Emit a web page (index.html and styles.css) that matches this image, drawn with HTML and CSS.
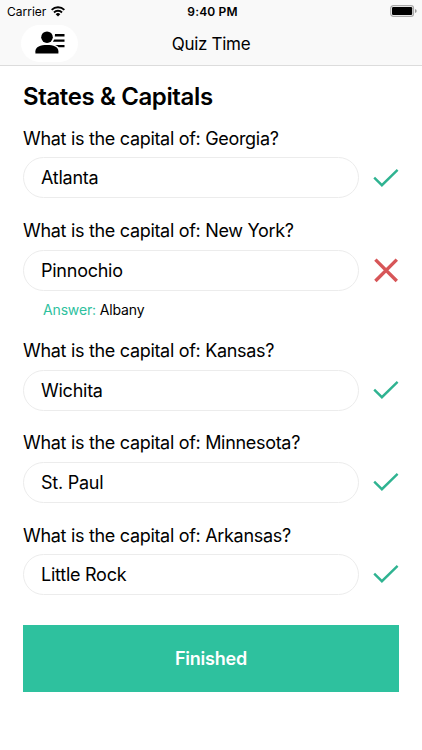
FILE: index.html
```html
<!DOCTYPE html>
<html lang="en">
<head>
<meta charset="utf-8">
<title>Quiz Time</title>
<link rel="stylesheet" href="styles.css">
</head>
<body>
<svg class="sprites" aria-hidden="true">
  <symbol id="check" viewBox="0 0 26 20"><path d="M1.2 9.7 8.9 17.2 24.6 1.8" fill="none" stroke="currentColor" stroke-width="2.4"/></symbol>
  <symbol id="cross" viewBox="0 0 26 26"><path d="M2.4 2.6 23.8 24M23.8 2.6 2.4 24" fill="none" stroke="currentColor" stroke-width="3.4"/></symbol>
</svg>
<header class="header">
  <div class="status">
    <div class="carrier"><span>Carrier</span>
      <svg class="wifi" width="14" height="11" viewBox="0 0 14 11"><path d="M.6 3.9a9 9 0 0 1 12.8 0M3 6.5a5.6 5.6 0 0 1 8 0" fill="none" stroke="#000" stroke-width="1.9"/><path d="M4.7 8.3a3.2 3.2 0 0 1 4.6 0L7 10.6z"/></svg>
    </div>
    <span class="time">9:40 PM</span>
    <svg class="battery" width="28" height="12" viewBox="0 0 28 12"><rect x=".7" y=".7" width="22.8" height="10.6" rx="2.6" fill="#f9f9f9" stroke="#aaa" stroke-width="1.2"/><rect x="2" y="2" width="20.2" height="8" rx="1.2"/><path d="M25 4.1q1.7.5 1.7 1.9T25 7.9z" fill="#999"/></svg>
  </div>
  <div class="nav">
    <div class="profile">
      <svg width="30" height="24" viewBox="0 0 30 24"><circle cx="12" cy="6.2" r="5.8"/><path d="M.4 22.4v-2.2c0-4.4 5.1-6.3 11.6-6.3s11.4 1.9 11.4 6.3v2.2z"/><path d="M20 3.1h9.5v2.3H19.8zM19.2 8.5h10.3v2.3H17.9zM20.2 14h9.3v2.3h-5.8q-1.3-1.5-3.5-2.3z"/></svg>
    </div>
    <h1 class="title">Quiz Time</h1>
  </div>
</header>
<main class="quiz">
  <h2 class="heading">States &amp; Capitals</h2>
  <section class="question">
    <p class="prompt">What is the capital of: Georgia?</p>
    <div class="row"><div class="field">Atlanta</div><svg class="check"><use href="#check"/></svg></div>
  </section>
  <section class="question">
    <p class="prompt">What is the capital of: New York?</p>
    <div class="row"><div class="field">Pinnochio</div><svg class="cross"><use href="#cross"/></svg></div>
    <p class="answer"><span>Answer:</span> Albany</p>
  </section>
  <section class="question">
    <p class="prompt">What is the capital of: Kansas?</p>
    <div class="row"><div class="field">Wichita</div><svg class="check"><use href="#check"/></svg></div>
  </section>
  <section class="question">
    <p class="prompt">What is the capital of: Minnesota?</p>
    <div class="row"><div class="field">St. Paul</div><svg class="check"><use href="#check"/></svg></div>
  </section>
  <section class="question">
    <p class="prompt">What is the capital of: Arkansas?</p>
    <div class="row"><div class="field">Little Rock</div><svg class="check"><use href="#check"/></svg></div>
  </section>
  <button class="finish">Finished</button>
</main>
</body>
</html>
```
FILE: styles.css
```css
* { box-sizing: border-box; }
body { margin: 0; height: 750px; overflow: hidden; background: #fff; color: #000; font-family: Inter, "Liberation Sans", sans-serif; }
h1, h2, p { margin: 0; }
svg { display: block; flex: none; }
.sprites { display: none; }
.header { height: 66px; background: #f9f9f9; border-bottom: 1px solid #dcdcdc; }
.status { display: grid; grid-template-columns: 1fr auto 1fr; align-items: center; height: 22px; padding: 0 4px 0 7px; font-size: 12px; }
.carrier { display: flex; align-items: center; gap: 5px; }
.time { font-weight: 600; letter-spacing: .15px; }
.battery { justify-self: end; }
.nav { display: grid; grid-template-columns: 1fr auto 1fr; align-items: center; height: 43px; padding: 0 21px; }
.profile { display: flex; align-items: center; justify-content: center; width: 57px; height: 37px; border-radius: 19px; background: #fff; }
.profile svg { margin-top: -1px; }
.title { font-size: 17px; font-weight: 400; letter-spacing: -.3px; }
.quiz { padding: 15px 23px 0; }
.heading { height: 46px; line-height: 32px; font-size: 24px; font-weight: 600; letter-spacing: -.38px; }
.question { margin-bottom: 20.8px; }
.prompt { height: 30.4px; line-height: 24px; font-size: 18px; letter-spacing: -.31px; white-space: nowrap; }
.row { display: flex; align-items: center; gap: 14px; }
.field { width: 337px; height: 41px; border: 1px solid #ececec; border-radius: 21px; padding-left: 17px; line-height: 39px; font-size: 18px; letter-spacing: -.25px; }
.check { width: 26px; height: 20px; color: #2fb391; }
.cross { width: 26px; height: 26px; color: #d75658; }
.answer { height: 27.8px; padding: 9.5px 0 0 20px; line-height: 20px; font-size: 14px; letter-spacing: -.15px; }
.answer span { color: #2ec19e; }
.finish { display: block; width: 376px; height: 67px; margin-top: 30px; padding: 0; border: 0; background: #2ec19e; color: #fff; font: 600 18px Inter, "Liberation Sans", sans-serif; letter-spacing: -.2px; }
```
